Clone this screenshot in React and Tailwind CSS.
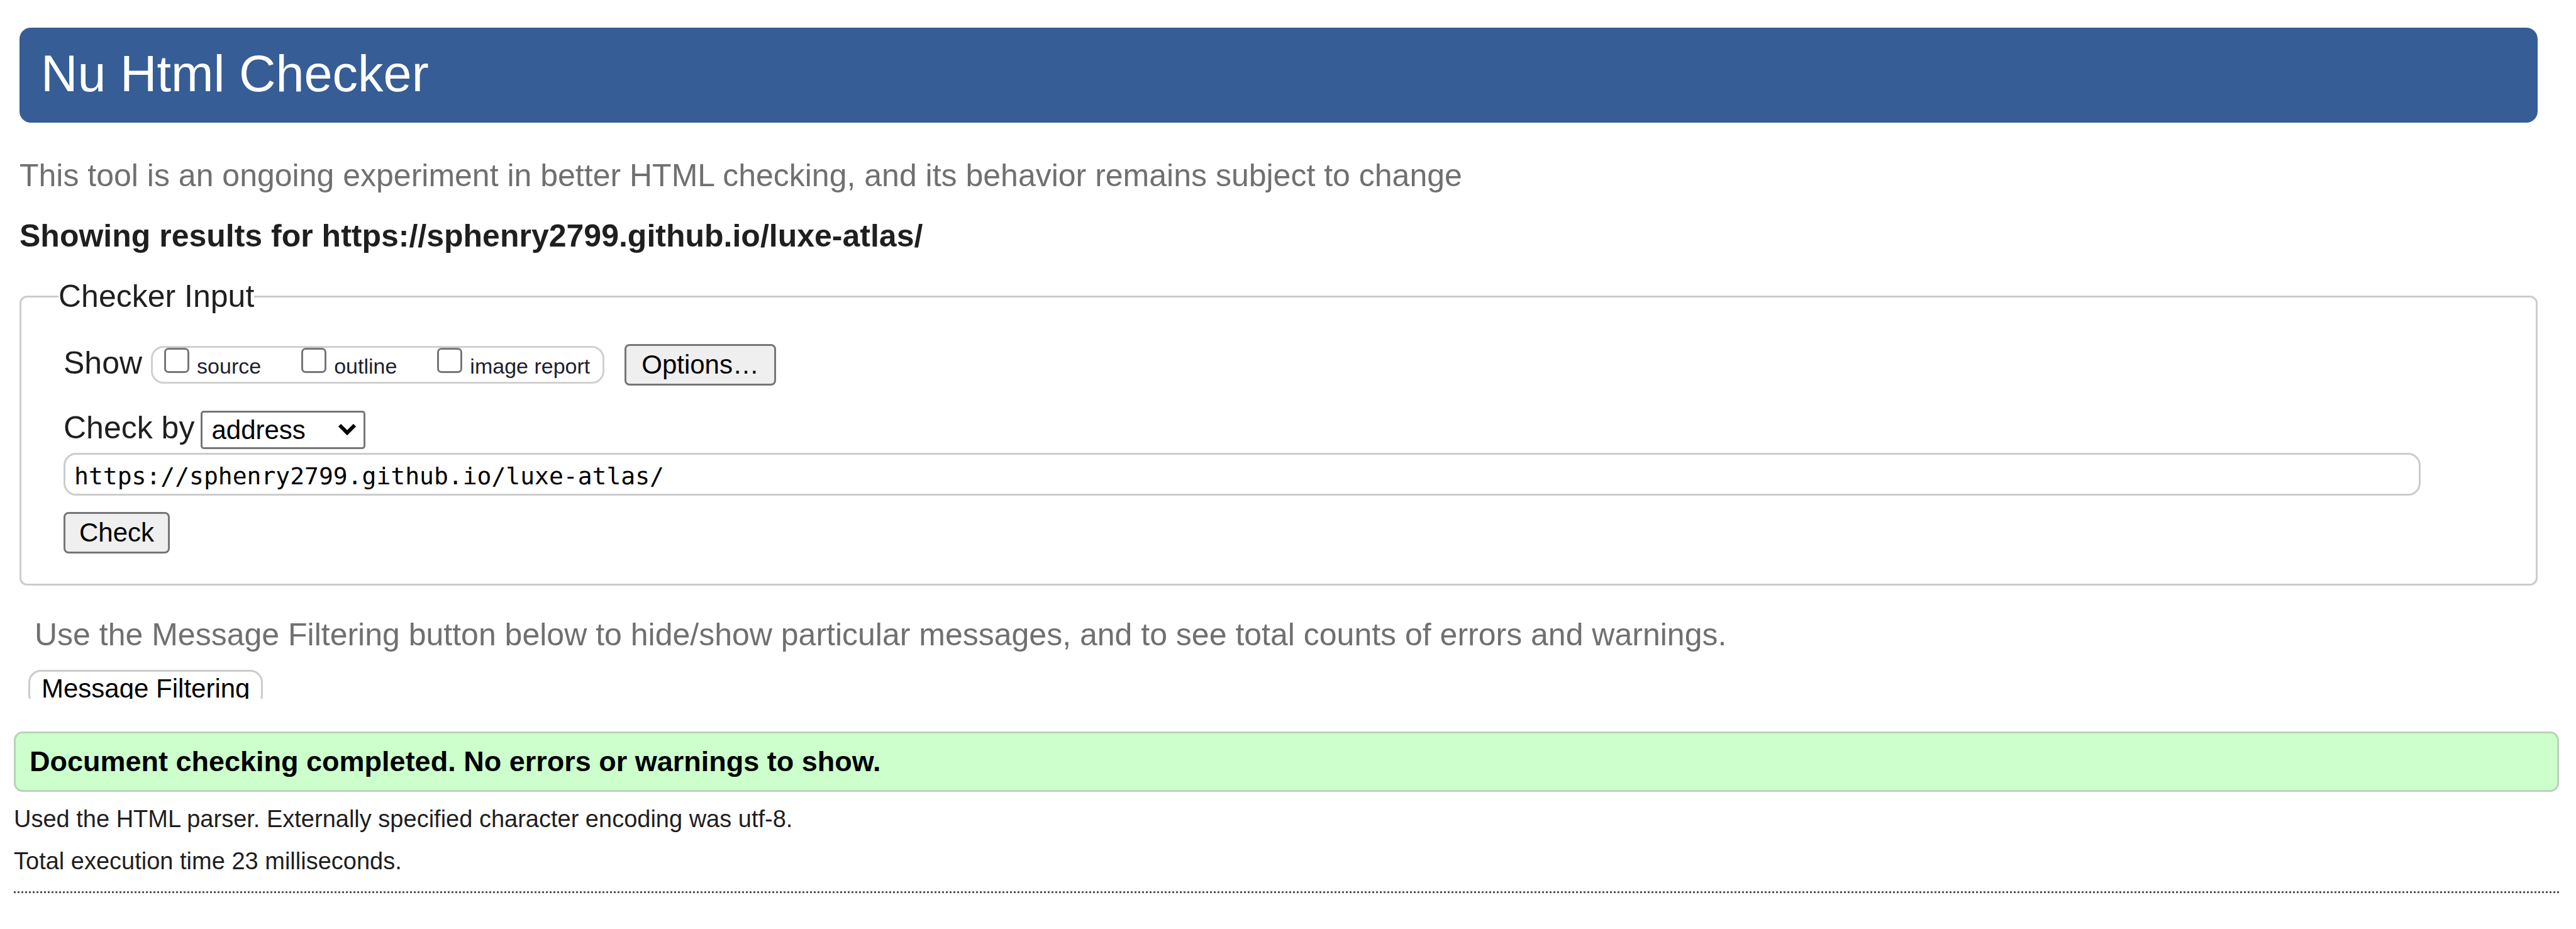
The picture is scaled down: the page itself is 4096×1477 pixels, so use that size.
const CHECKS = ['source', 'outline', 'image report'];

function Check({ label }) {
  return (
    <label className="flex h-full items-baseline gap-3 text-[34px] leading-[58px] text-[#1f1f2e]">
      <input
        type="checkbox"
        className="size-10 shrink-0 appearance-none self-start rounded-[7px] border-3 border-[#767676] bg-white"
      />
      {label}
    </label>
  );
}

const BUTTON =
  'h-[66px] rounded-[8px] border-3 border-[#767676] bg-[#efefef] text-[42px] leading-[60px] text-black';

export default function App() {
  return (
    <div className="min-h-screen bg-white pt-11 font-['Liberation_Sans',Arial,sans-serif] text-[#1f1f1f]">
      <main className="pr-[61px] pl-[31px]">
        <h1 className="rounded-[18px] bg-[#365d95] px-[34px] pb-1 text-[81px] leading-[147px] text-white">
          Nu Html Checker
        </h1>
        <p className="mt-[54px] text-[50px] leading-[60px] text-[#707070]">
          This tool is an ongoing experiment in better HTML checking, and its behavior remains subject to change
        </p>
        <h2 className="mt-9 text-[50px] leading-[60px] font-bold">
          Showing results for https://sphenry2799.github.io/luxe-atlas/
        </h2>
        <form onSubmit={(e) => e.preventDefault()}>
          <fieldset className="mt-9 rounded-[12px] border-3 border-[#cccccc] px-[67px] pb-12">
            <legend className="-ml-2 text-[50px] leading-[60px]">Checker Input</legend>
            <div className="mt-[46px] flex items-start">
              <span className="mr-[14px] text-[50px] leading-[60px]">Show</span>
              <div className="flex h-[60px] items-start gap-16 self-center rounded-[20px] border-3 border-[#d0d0d0] pr-5 pl-[18px]">
                {CHECKS.map((c) => (
                  <Check key={c} label={c} />
                ))}
              </div>
              <button type="button" className={`ml-8 px-6 ${BUTTON}`}>
                Options…
              </button>
            </div>
            <div className="mt-10 flex items-start">
              <label htmlFor="by" className="mr-[10px] text-[50px] leading-[54px]">
                Check by
              </label>
              <div className="relative">
                <select
                  id="by"
                  className="block h-[61px] w-[262px] appearance-none rounded-[5px] border-3 border-[#767676] bg-white pl-[14px] text-[42px] leading-[52px] text-black"
                >
                  <option>address</option>
                </select>
                <svg
                  className="pointer-events-none absolute top-5 right-[14px] h-[20px] w-[30px]"
                  viewBox="0 0 30 20"
                  fill="none"
                  stroke="#000"
                  strokeWidth="6"
                >
                  <path d="M3 3l12 12L27 3" />
                </svg>
              </div>
            </div>
            <input
              type="text"
              aria-label="Address"
              defaultValue="https://sphenry2799.github.io/luxe-atlas/"
              className="mt-[6px] block h-[68px] w-[97%] rounded-[20px] border-3 border-[#cccccc] px-[14px] pt-[6px] font-['DejaVu_Sans_Mono',monospace] text-[38px] text-black"
            />
            <button type="submit" className={`mt-[26px] block px-[22px] ${BUTTON}`}>
              Check
            </button>
          </fieldset>
        </form>
        <p className="mt-12 pl-6 text-[50px] leading-[60px] text-[#707070]">
          Use the Message Filtering button below to hide/show particular messages, and to see total counts of errors and
          warnings.
        </p>
        <div className="mt-[26px] ml-[14px] h-[46px] overflow-hidden">
          <button
            type="button"
            className="h-[60px] rounded-[20px] border-3 border-[#cccccc] bg-white px-[18px] text-[42px] leading-[54px] text-black"
          >
            Message Filtering
          </button>
        </div>
      </main>
      <section className="mt-[52px] pr-[27px] pl-[22px]">
        <p className="rounded-[14px] border-3 border-[#b9d3b9] bg-[#ccffcc] px-[22px] text-[45px] leading-[90px] font-bold text-black">
          Document checking completed. No errors or warnings to show.
        </p>
        <p className="mt-[19px] text-[38px] leading-[48px]">
          Used the HTML parser. Externally specified character encoding was utf-8.
        </p>
        <p className="mt-[19px] text-[38px] leading-[48px]">Total execution time 23 milliseconds.</p>
        <hr className="mt-6 border-t-3 border-dotted border-[#555555]" />
      </section>
    </div>
  );
}
